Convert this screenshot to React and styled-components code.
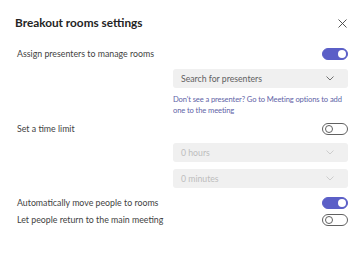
import React from 'react';
import styled, { createGlobalStyle } from 'styled-components';

const Global = createGlobalStyle`
  html, body { margin: 0; padding: 0; background: #fff; }
  body { font-family: "Segoe UI", Lato, "Liberation Sans", sans-serif; }
`;

const Dialog = styled.div`
  width: 360px;
  height: 256px;
  box-sizing: border-box;
  padding: 15px 12px 0 17px;
  background: #fff;
  display: flex;
  flex-direction: column;
`;

const Header = styled.div`
  display: flex;
  align-items: center;
  justify-content: space-between;
  height: 16px;
  margin-left: -2px;
`;

const Title = styled.h1`
  margin: 0;
  font-size: 11.8px;
  font-weight: 700;
  color: #242424;
  line-height: 16px;
`;

const Close = styled.button`
  border: 0;
  background: none;
  padding: 0;
  width: 10px;
  height: 10px;
  margin-right: 1px;
  display: flex;
  align-items: center;
  justify-content: center;
`;

const Row = styled.div`
  display: flex;
  align-items: center;
  justify-content: space-between;
  height: 12px;
  margin-top: ${p => p.$top}px;
`;

const Label = styled.span`
  font-size: 8.8px;
  color: #424242;
  line-height: 12px;
`;

const Track = styled.div`
  width: 26px;
  height: 12px;
  box-sizing: border-box;
  border-radius: 6px;
  background: ${p => (p.$on ? '#5b5fc7' : '#fff')};
  border: 1px solid ${p => (p.$on ? '#5b5fc7' : '#616161')};
  display: flex;
  align-items: center;
  justify-content: ${p => (p.$on ? 'flex-end' : 'flex-start')};
  padding: 0 1.5px;
`;

const Knob = styled.div`
  width: 8px;
  height: 8px;
  box-sizing: border-box;
  border-radius: 50%;
  background: #fff;
  border: ${p => (p.$on ? 'none' : '1px solid #616161')};
`;

const Control = styled.div`
  margin-left: 156px;
  margin-top: ${p => p.$top}px;
  width: 175px;
`;

const Select = styled.div`
  height: 19px;
  border-radius: 3px;
  background: #f0f0f0;
  display: flex;
  align-items: center;
  justify-content: space-between;
  padding: 0 14px 0 8px;
  font-size: 8.7px;
  color: ${p => (p.$disabled ? '#bdbdbd' : '#616161')};
`;

const Hint = styled.p`
  margin: 0;
  font-size: 7.6px;
  letter-spacing: -0.12px;
  line-height: 11px;
  color: #6264a7;
`;

const Toggle = ({ on }) => (
  <Track $on={on}>
    <Knob $on={on} />
  </Track>
);

const Chevron = ({ color }) => (
  <svg width="8" height="5" viewBox="0 0 8 5">
    <path d="M0.5 0.5 L4 4 L7.5 0.5" fill="none" stroke={color} strokeWidth="0.9" />
  </svg>
);

const App = () => (
  <>
    <Global />
    <Dialog>
      <Header>
        <Title>Breakout rooms settings</Title>
        <Close aria-label="Close">
          <svg width="9" height="9" viewBox="0 0 9 9">
            <path d="M0.5 0.5 L8.5 8.5 M8.5 0.5 L0.5 8.5" stroke="#424242" strokeWidth="0.9" />
          </svg>
        </Close>
      </Header>

      <Row $top={17}>
        <Label>Assign presenters to manage rooms</Label>
        <Toggle on />
      </Row>
      <Control $top={9}>
        <Select>
          Search for presenters
          <Chevron color="#616161" />
        </Select>
      </Control>
      <Control $top={6}>
        <Hint>Don't see a presenter? Go to Meeting options to add one to the meeting</Hint>
      </Control>

      <Row $top={7}>
        <Label>Set a time limit</Label>
        <Toggle />
      </Row>
      <Control $top={8}>
        <Select $disabled>
          0 hours
          <Chevron color="#c8c8c8" />
        </Select>
      </Control>
      <Control $top={7}>
        <Select $disabled>
          0 minutes
          <Chevron color="#c8c8c8" />
        </Select>
      </Control>

      <Row $top={9}>
        <Label>Automatically move people to rooms</Label>
        <Toggle on />
      </Row>
      <Row $top={5}>
        <Label>Let people return to the main meeting</Label>
        <Toggle />
      </Row>
    </Dialog>
  </>
);

export default App;
